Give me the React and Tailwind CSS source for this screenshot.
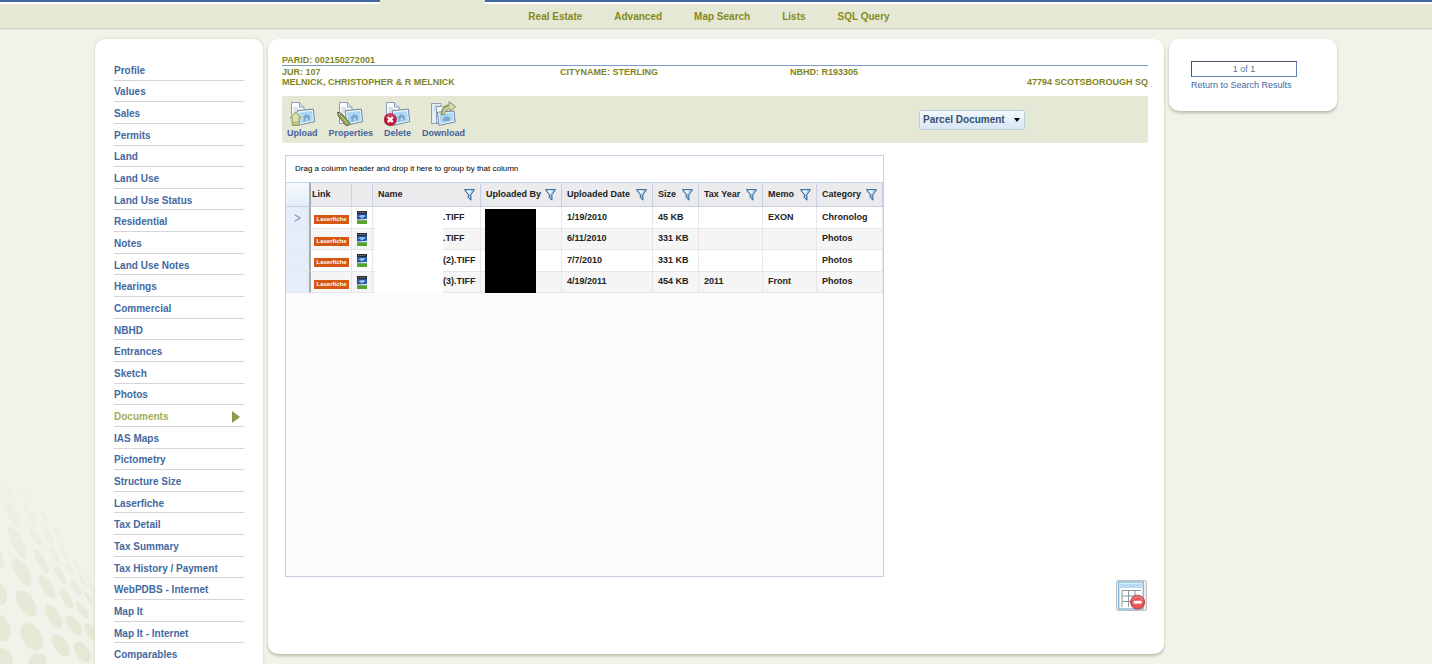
import { useState } from 'react'

const topLinks = ['Real Estate', 'Advanced', 'Map Search', 'Lists', 'SQL Query']

const sideLinks = [
  'Profile', 'Values', 'Sales', 'Permits', 'Land', 'Land Use', 'Land Use Status',
  'Residential', 'Notes', 'Land Use Notes', 'Hearings', 'Commercial', 'NBHD',
  'Entrances', 'Sketch', 'Photos', 'Documents', 'IAS Maps', 'Pictometry',
  'Structure Size', 'Laserfiche', 'Tax Detail', 'Tax Summary',
  'Tax History / Payment', 'WebPDBS - Internet', 'Map It', 'Map It - Internet',
  'Comparables',
]

const columns = [
  { label: 'Name', width: 'w-[108px]' },
  { label: 'Uploaded By', width: 'w-[81px]' },
  { label: 'Uploaded Date', width: 'w-[91px]' },
  { label: 'Size', width: 'w-[46px]' },
  { label: 'Tax Year', width: 'w-[64px]' },
  { label: 'Memo', width: 'w-[54px]' },
  { label: 'Category', width: 'w-[66px]' },
]

const documents = [
  { name: '.TIFF', date: '1/19/2010', size: '45 KB', year: '', memo: 'EXON', category: 'Chronolog' },
  { name: '.TIFF', date: '6/11/2010', size: '331 KB', year: '', memo: '', category: 'Photos' },
  { name: '(2).TIFF', date: '7/7/2010', size: '331 KB', year: '', memo: '', category: 'Photos' },
  { name: '(3).TIFF', date: '4/19/2011', size: '454 KB', year: '2011', memo: 'Front', category: 'Photos' },
]

// cx, cy, rx, ry, rotation, opacity
const dots = [
  [2, 500, 27, 42, -20, 1], [95, 527, 29, 45, -32, 1], [2, 598, 36, 36, -20, 1],
  [112, 604, 28, 26, -35, 1], [182, 553, 20, 38, -32, 1], [247, 573, 20, 35, -35, 1],
  [-4, 396, 22, 38, -20, 0.8], [79, 427, 24, 45, -32, 0.9], [161, 466, 18, 40, -32, 0.9],
  [222, 493, 17, 34, -35, 0.9], [275, 515, 14, 32, -35, 0.9], [66, 333, 20, 47, -30, 0.7],
  [141, 377, 15, 40, -32, 0.8], [199, 413, 12, 34, -32, 0.8], [248, 447, 10, 30, -35, 0.8],
  [-4, 290, 14, 32, -20, 0.5], [51, 245, 16, 52, -26, 0.5], [124, 300, 12, 40, -30, 0.6],
  [180, 342, 10, 32, -32, 0.6], [228, 380, 9, 28, -34, 0.6], [268, 414, 7, 24, -35, 0.7],
  [38, 160, 15, 42, -26, 0.3], [107, 228, 10, 36, -30, 0.4], [162, 280, 8, 30, -30, 0.4],
  [208, 322, 7, 26, -32, 0.4], [248, 358, 6, 24, -34, 0.4], [278, 386, 5, 20, -35, 0.5],
  [90, 160, 9, 34, -28, 0.25], [145, 222, 7, 30, -30, 0.3], [190, 268, 5, 26, -32, 0.3],
  [228, 310, 4, 22, -34, 0.3], [262, 346, 4, 20, -35, 0.3], [75, 100, 7, 28, -28, 0.15],
  [130, 165, 5, 26, -30, 0.2], [174, 220, 4, 22, -32, 0.2], [20, 85, 12, 36, -24, 0.15],
]

function DotPattern() {
  return (
    <svg className="absolute bottom-0 left-0 w-[95px] h-[203px]" viewBox="0 0 285 609" fill="#e4e8d4" aria-hidden="true">
      {dots.map(([cx, cy, rx, ry, rot, opacity]) => (
        <ellipse key={`${cx}-${cy}`} cx={cx} cy={cy} rx={rx} ry={ry} opacity={opacity} transform={`rotate(${rot} ${cx} ${cy})`} />
      ))}
    </svg>
  )
}

function FilterIcon() {
  return (
    <svg className="w-[11px] h-3 shrink-0" viewBox="0 0 11 12" aria-hidden="true">
      <path d="M0.5 0.7H10.5L6.9 5.6V11.2L4.3 8.6V5.6Z" fill="#b9e0fa" stroke="#2c517c" strokeWidth="1" strokeLinejoin="round" />
      <path d="M2.2 1.4H7L4.9 4.6Z" fill="#f2fbff" />
      <path d="M6 5.5V9.6" stroke="#58a0dc" strokeWidth="1" />
    </svg>
  )
}

// Page with a photo in front, shared by all the toolbar icons
function PagePhoto() {
  return (
    <>
      <path d="M2.5 1.5H10.5L15 6V22.5H2.5Z" fill="#fafcfe" stroke="#8c9eb5" />
      <path d="M10.5 1.5V6H15" fill="#dfe7f0" stroke="#8c9eb5" />
      <path d="M4.5 7H9M4.5 9H12M4.5 11H9" stroke="#b6c3d3" />
      <path d="M8.3 9.8L24.4 8L25.6 20.6L9.6 24.4Z" fill="#eaf4fb" stroke="#71879f" />
      <path d="M10 11.4L23 9.9L24 19.4L11 22.4Z" fill="#a9d9f5" />
      <path d="M13 17L17 13L21.5 15.5L20.8 16V19.2L14.4 20.8V17Z" fill="#7fa6c9" />
      <path d="M16.7 17H18.6V19.6L16.7 20Z" fill="#c9e6f7" />
    </>
  )
}

function ToolIcon({ type }) {
  return (
    <svg className="w-[27px] h-[26px]" viewBox="0 0 27 26" fill="none" aria-hidden="true">
      {type === 'Download' ? (
        <>
          <path d="M1.5 2.5H11V22.5H1.5Z" fill="#e5edf5" stroke="#8c9eb5" />
          <path d="M4 5H9M4 7H9M4 9H8" stroke="#b6c3d3" />
          <path d="M6.5 5.5H13.5L17 9V22H6.5Z" fill="#fafcfe" stroke="#8c9eb5" />
          <path d="M7.4 11.2L24 10L25.2 21L9 24.4Z" fill="#eaf4fb" stroke="#71879f" />
          <path d="M9.2 12.8L22.8 11.6L23.6 19.8L10.4 22.6Z" fill="#a9d9f5" />
          <path d="M12.5 18L16 15L20 16.6V19.4L13.6 20.8Z" fill="#7fa6c9" />
          <path d="M11 13.5C11.5 7 14.5 4 19 3.8V0.8L25.8 5.6L20 10.3V7.6C16.5 7.6 15 9.5 14.6 13.5Z" fill="#d5dba9" stroke="#7f8b5b" strokeWidth="0.9" />
          <path d="M12 12.8C12.6 8 15 5 19.4 4.9" stroke="#8c984a" strokeWidth="1.2" />
        </>
      ) : (
        <PagePhoto />
      )}
      {type === 'Upload' && (
        <>
          <path d="M6.6 10.8L12.6 17H10.4V24.5H3.2V17H0.8Z" fill="#bcc480" stroke="#f4f6e4" strokeWidth="2" />
          <path d="M6.6 10.8L12.6 17H10.4V24.5H3.2V17H0.8Z" fill="#bac37e" stroke="#808a58" strokeWidth="0.8" />
          <path d="M6.6 12.2L10.6 16.4H9.4V20L4 20.6V16.4H2.6Z" fill="#dde2b5" />
        </>
      )}
      {type === 'Properties' && (
        <>
          <path d="M0.8 11.3L4.8 12.6L13 22.3L10.5 24.8L8.8 24.4L1.4 15.2Z" fill="#93a052" stroke="#5c6534" strokeWidth="0.9" />
          <path d="M0.8 11.3L4.8 12.6L1.4 15.2Z" fill="#f0e7d3" stroke="#555f66" strokeWidth="0.7" />
          <path d="M0.8 11.3L2.4 11.9L1.1 13Z" fill="#333" />
          <path d="M4.2 15L11 23.4" stroke="#c9d386" />
        </>
      )}
      {type === 'Delete' && (
        <>
          <circle cx="6.3" cy="18.6" r="6.2" fill="#c5173a" stroke="#94122c" strokeWidth="0.6" />
          <path d="M2 16.5A4.8 4.8 0 0 1 10.6 16.5" stroke="#e2677c" strokeWidth="1" />
          <path d="M3.8 16.1L8.8 21.1M8.8 16.1L3.8 21.1" stroke="#fff" strokeWidth="2.4" />
        </>
      )}
    </svg>
  )
}

function TiffIcon() {
  return (
    <svg className="block w-[10px] h-[13px]" viewBox="0 0 10 13" role="img" aria-label="TIFF image">
      <rect width="10" height="13" fill="#5d86c4" />
      <rect width="10" height="3" fill="#252a33" />
      <path d="M1 1.5H9" stroke="#8d949e" strokeWidth="0.8" strokeDasharray="1.4 0.6" />
      <rect y="3" width="10" height="6" fill="#2450a5" />
      <path d="M1 5.6C3 3.8 7 3.6 9 5C7.2 5.6 6 7.6 4 7.4C4.4 6.6 3 5.8 1 5.6Z" fill="#8fc1ee" />
      <path d="M0 8.6L10 7.8V9.5H0Z" fill="#dbe9ee" />
      <rect y="9.4" width="10" height="3.6" fill="#55a32a" />
    </svg>
  )
}

function GridRemoveIcon() {
  return (
    <svg className="w-[27px] h-[29px]" viewBox="0 0 27 29" fill="none" aria-hidden="true">
      <rect x="0.7" y="1" width="24.6" height="27" fill="#fff" stroke="#86b8dc" strokeWidth="1.4" />
      <rect x="2" y="2.4" width="22" height="4.6" fill="#b5dcf2" />
      <path d="M4 9.5H23M4 15H17M4 20.5H13M4 9.5V26M10.5 9.5V26M17 9.5V15" stroke="#8e969e" />
      <circle cx="19.6" cy="21.2" r="7" fill="#e8565a" stroke="#a94b4e" />
      <path d="M14.6 19A5.4 5.4 0 0 1 24.6 19" stroke="#f49a9a" />
      <rect x="15.6" y="19.8" width="8" height="2.8" fill="#fff" />
    </svg>
  )
}

function DocumentGrid() {
  return (
    <div className="relative ml-[3px] mt-3 w-[599px] min-h-[422px] border border-[#c5cfe0] bg-[#fafbfa]">
      <p className="h-[26px] bg-white pl-[9px] text-[8px] leading-[26px] text-black">
        Drag a column header and drop it here to group by that column
      </p>
      <table className="w-full table-fixed border-separate border-spacing-0 border-t border-[#c5d3e6] text-left text-[9px] text-[#222]">
        <thead>
          <tr className="h-6 bg-[#ebebee]">
            <th className="w-[23px] border-b border-[#c3d1e2] bg-gradient-to-b from-[#f7fafd] to-[#e3ecf9] p-0" aria-label="Selected row" />
            <th className="w-[43px] border-b border-l-2 border-r border-b-[#c3d1e2] border-l-[#a3adb8] border-r-[#c7d3e4] p-0 pl-px font-bold">Link</th>
            <th className="w-[21px] border-b border-r border-[#c7d3e4] p-0" aria-label="Type" />
            {columns.map((col) => (
              <th key={col.label} className={`${col.width} border-b border-r border-[#c3d1e2] p-0 pl-[5px] pr-[5px] font-bold`}>
                <span className="flex items-center justify-between whitespace-nowrap">
                  {col.label}
                  <button type="button" aria-label={`Filter ${col.label}`}>
                    <FilterIcon />
                  </button>
                </span>
              </th>
            ))}
          </tr>
        </thead>
        <tbody className="[&_td]:border-b [&_td]:border-r [&_td]:border-[#e6e7ea] [&_td]:p-0 [&_td]:pl-[5px] [&_td]:font-bold [&_td]:whitespace-nowrap">
          {documents.map((doc, i) => (
            <tr key={doc.date} className="h-[22px] bg-white even:h-[21px] even:bg-[#f5f5f5]">
              <td className="bg-[#e5edfa]">
                {i === 0 && (
                  <svg className="mx-[3px] h-2 w-[7px]" viewBox="0 0 7 8" fill="none" aria-hidden="true">
                    <path d="M0.7 0.8L6 4L0.7 7.2" stroke="#86a0c4" strokeWidth="1.3" />
                  </svg>
                )}
              </td>
              <td className="border-l-2 border-l-[#a3adb8]!">
                <a href="#" className="mt-1 -ml-0.5 block h-[9px] w-[35px] bg-[#d4580f] text-center text-[6px] leading-[9px] text-white">Laserfiche</a>
              </td>
              <td><TiffIcon /></td>
              <td>
                <span className="block pl-[65px]">{doc.name}</span>
              </td>
              <td />
              <td>{doc.date}</td>
              <td>{doc.size}</td>
              <td>{doc.year}</td>
              <td>{doc.memo}</td>
              <td>{doc.category}</td>
            </tr>
          ))}
        </tbody>
      </table>
      {/* Masks over the file names and the uploader */}
      <div className="absolute left-[89px] top-[54px] h-[84px] w-[68px] bg-white" />
      <div className="absolute left-[199px] top-[53px] h-[84px] w-[51px] bg-black" />
    </div>
  )
}

export default function App() {
  const [active, setActive] = useState('Documents')
  const [docType, setDocType] = useState('Parcel Document')

  return (
    <div className="relative h-screen overflow-hidden bg-[#f1f2e9] font-['Liberation_Sans',Arial,sans-serif] text-[10px]">
      <DotPattern />

      {/* Top navigation */}
      <header className="bg-[#e5e8d5] border-b border-[#cdd0be] shadow-[0_1px_0_#e3e6d6]">
        <div className="flex h-1 justify-between">
          <div className="w-[380px] border-t-2 border-b border-t-[#42699f] border-b-white bg-white" />
          <div className="ml-[105px] flex-1 border-t-2 border-b border-t-[#42699f] border-b-white bg-white" />
        </div>
        <nav className="flex h-6 items-center justify-center gap-8 pr-[14px] font-bold text-[#868a20]">
          {topLinks.map((link) => (
            <a key={link} href="#">{link}</a>
          ))}
        </nav>
      </header>

      <div className="relative flex items-start gap-[5px] px-[95px] pt-[10px]">
        {/* Side menu */}
        <aside className="w-[168px] shrink-0 rounded-t-[10px] bg-white px-[19px] pt-5 shadow-[0_0_3px_#cfd2bb]">
          <ul className="grid h-[606px] auto-rows-fr font-bold text-[#44699f]">
            {sideLinks.map((link) => (
              <li key={link} className="border-b border-[#d8d3d8]">
                <a
                  href="#"
                  onClick={() => setActive(link)}
                  className={`flex h-full items-center justify-between pt-0.5 ${active === link ? 'text-[#a3ad58]' : ''}`}
                >
                  {link}
                  {active === link && (
                    <svg className="mr-1 h-3 w-2" viewBox="0 0 8 12" fill="#8e9c48" aria-hidden="true">
                      <path d="M0 0L8 6L0 12Z" />
                    </svg>
                  )}
                </a>
              </li>
            ))}
          </ul>
        </aside>

        {/* Parcel content */}
        <main className="min-w-0 flex-1 rounded-[10px] bg-white pl-[14px] pr-4 pt-4 pb-[43px] shadow-[0_2px_3px_#b9bba6]">
          <div className="text-[9px] leading-[10px] font-bold text-[#7f851c]">
            <p className="border-b border-[#7d99c4]">PARID: 002150272001</p>
            <div className="grid grid-cols-[278px_230px_1fr] pt-px">
              <span>JUR: 107</span>
              <span>CITYNAME: STERLING</span>
              <span>NBHD: R193305</span>
            </div>
            <div className="flex justify-between">
              <span>MELNICK, CHRISTOPHER &amp; R MELNICK</span>
              <span>47794 SCOTSBOROUGH SQ</span>
            </div>
          </div>

          <div className="mt-[9px] flex h-[47px] items-center justify-between rounded-xs bg-[#e5e8d5] pl-[5px] pr-[123px]">
            <div className="flex gap-[11px]">
              {['Upload', 'Properties', 'Delete', 'Download'].map((tool) => (
                <button key={tool} type="button" className="flex flex-col items-center text-[9px] leading-3 font-bold text-[#44639c]">
                  <ToolIcon type={tool} />
                  {tool}
                </button>
              ))}
            </div>
            <div className="relative">
              <select
                aria-label="Document type"
                value={docType}
                onChange={(e) => setDocType(e.target.value)}
                className="block h-5 w-[106px] appearance-none rounded-xs border border-[#bccde2] bg-gradient-to-b from-[#f4f8fd] to-[#d9e6f5] pl-[3px] font-bold text-[#34506f]"
              >
                <option>Parcel Document</option>
              </select>
              <svg className="pointer-events-none absolute right-[5px] top-2 h-1 w-[6px]" viewBox="0 0 6 4" aria-hidden="true">
                <path d="M0 0H6L3 4Z" fill="#000" />
              </svg>
            </div>
          </div>

          <DocumentGrid />

          <div className="mt-[3px] flex justify-end pr-px">
            <button type="button" aria-label="Remove from grid" className="flex h-[31px] w-[31px] items-center rounded-xs border border-[#bfc1c3] bg-[#eceded] pl-px">
              <GridRemoveIcon />
            </button>
          </div>
        </main>

        {/* Result pager */}
        <aside className="flex h-[72px] w-[168px] shrink-0 flex-col items-start rounded-[10px] bg-white pl-[22px] pt-[22px] shadow-[0_2px_3px_#b9bba6]">
          <input
            aria-label="Current record"
            readOnly
            value="1 of 1"
            className="h-4 w-[106px] border border-t-[#4b5568] border-l-[#4b5568] border-r-[#5f83b5] border-b-[#5f83b5] bg-white text-center text-[9px] text-[#5877a8]"
          />
          <a href="#" className="text-[9px] leading-4 text-[#44699f]">Return to Search Results</a>
        </aside>
      </div>
    </div>
  )
}
